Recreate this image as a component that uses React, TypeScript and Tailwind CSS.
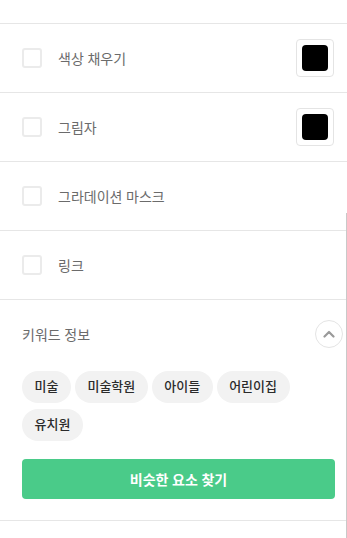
import React from 'react';

interface OptionRow {
  id: string
  label: string
  color?: string
}

const rows: OptionRow[] = [
  { id: 'fill', label: '색상 채우기', color: '#000000' },
  { id: 'shadow', label: '그림자', color: '#000000' },
  { id: 'gradient', label: '그라데이션 마스크' },
  { id: 'link', label: '링크' },
];

const keywords = ['미술', '미술학원', '아이들', '어린이집', '유치원'];

const font = { fontFamily: '"Noto Sans", "Noto Sans CJK KR", sans-serif' };

const App: React.FC = () => {
  return (
    <div className="relative w-[347px] h-[538px] bg-white overflow-hidden" style={font}>
      <div className="h-[24px] border-b border-[#e6e6e6]" />

      {rows.map((row) => (
        <div
          key={row.id}
          className="h-[69px] border-b border-[#e6e6e6] pl-[22px] pr-[13px] flex items-center"
        >
          <span className="w-[20px] h-[20px] rounded-[3px] border-2 border-[#ebebeb] bg-white shrink-0" />
          <span className="ml-[16px] text-[14px] text-[#6b6b6b] flex-1">{row.label}</span>
          {row.color && (
            <span className="w-[38px] h-[38px] rounded-[4px] border border-[#e4e4e4] flex items-center justify-center">
              <span
                className="w-[26px] h-[26px] rounded-[4px]"
                style={{ backgroundColor: row.color }}
              />
            </span>
          )}
        </div>
      ))}

      <div className="h-[221px] border-b border-[#e6e6e6] pl-[22px] pr-[12px] pt-[20px]">
        <div className="flex items-center justify-between h-[28px]">
          <span className="text-[14px] text-[#6b6b6b]">키워드 정보</span>
          <button className="w-[28px] h-[28px] -mr-[8px] rounded-full border border-[#e4e4e4] flex items-center justify-center">
            <svg width="12" height="8" viewBox="0 0 12 8" fill="none">
              <path d="M1.5 6.5L6 2l4.5 4.5" stroke="#9a9a9a" strokeWidth="2.2" strokeLinecap="round" strokeLinejoin="round" />
            </svg>
          </button>
        </div>

        <div className="mt-[23px] flex flex-wrap gap-x-[4px] gap-y-[6px]">
          {keywords.map((k) => (
            <span
              key={k}
              className="h-[32px] px-[12.5px] rounded-full bg-[#f2f2f2] text-[13px] text-[#2b2b2b] font-medium flex items-center"
            >
              {k}
            </span>
          ))}
        </div>

        <button className="mt-[18px] w-full h-[40px] rounded-[4px] bg-[#4acb89] text-white text-[14px] font-bold">
          비슷한 요소 찾기
        </button>
      </div>

      <div className="absolute right-0 top-[213px] bottom-0 w-px bg-[#c9c9c9]" />
    </div>
  );
};

export default App;
